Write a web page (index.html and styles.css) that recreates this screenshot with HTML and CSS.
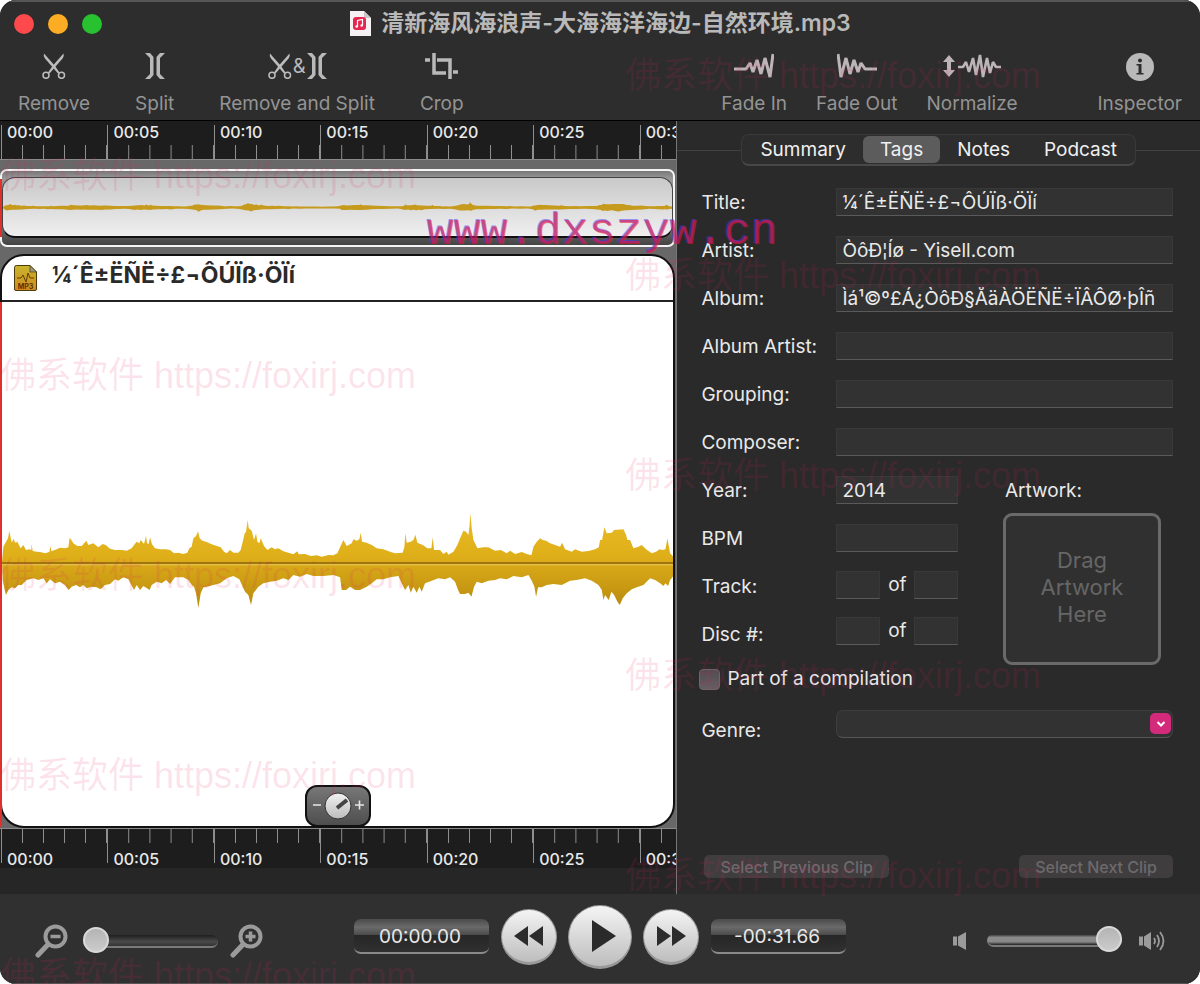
FILE: index.html
```html
<!DOCTYPE html>
<html lang="en">
<head>
<meta charset="utf-8">
<title>Audio Editor</title>
<link rel="stylesheet" href="styles.css">
</head>
<body>
<svg class="defs" aria-hidden="true">
  <defs>
    <linearGradient id="gold" x1="0" y1="0" x2="0" y2="1">
      <stop offset="0" stop-color="#e8bb22"/><stop offset=".45" stop-color="#dfaf1a"/><stop offset="1" stop-color="#b98a0e"/>
    </linearGradient>
    <linearGradient id="mp3" x1="0" y1="0" x2="0" y2="1">
      <stop offset="0" stop-color="#c9b52e"/><stop offset="1" stop-color="#d08a1c"/>
    </linearGradient>
    <linearGradient id="knob" x1="0" y1="0" x2="0" y2="1">
      <stop offset="0" stop-color="#f2f2f2"/><stop offset="1" stop-color="#bcbcbc"/>
    </linearGradient>
    <path id="wave" d="M6 215L10 170L18 155L24 145L28 122L33 148L36 158L40 146L46 158L52 155L62 175L70 165L78 180L88 178L94 180L95 162L98 183L110 185L120 186L135 190L148 186L151 168L154 184L170 178L180 173L195 175L205 172L209 143L214 150L220 160L232 168L245 168L259 152L265 165L280 160L295 172L308 162L318 166L330 176L345 180L365 180L380 182L395 175L402 165L410 155L418 160L422 150L432 162L438 138L441 160L446 162L450 142L456 163L465 175L480 178L498 178L510 180L522 190L535 188L550 192L562 188L568 175L575 170L580 145L588 138L594 124L599 145L607 152L618 155L635 163L650 168L662 172L672 185L680 190L690 180L700 188L715 188L722 180L728 155L734 130L738 125L743 90L746 115L755 122L762 150L768 130L772 155L778 160L782 145L792 168L802 180L815 172L825 178L835 175L850 184L865 188L880 193L892 184L896 193L915 192L932 198L950 196L965 200L985 195L1000 196L1012 190L1020 172L1030 150L1040 168L1055 160L1060 148L1070 152L1078 148L1082 128L1086 155L1100 158L1115 165L1130 175L1150 178L1170 185L1185 190L1208 188L1213 170L1216 130L1220 158L1232 155L1240 150L1246 134L1252 158L1268 165L1282 175L1294 175L1298 142L1302 180L1320 180L1330 192L1340 185L1345 194L1360 185L1372 165L1380 145L1390 122L1398 125L1405 135L1408 110L1411 70L1415 115L1420 150L1432 175L1450 172L1465 172L1485 182L1502 180L1520 190L1530 182L1545 192L1565 186L1580 192L1594 196L1600 170L1610 155L1620 145L1628 150L1638 152L1650 160L1665 165L1680 170L1686 158L1695 178L1715 185L1725 178L1745 185L1765 183L1785 178L1796 172L1800 150L1806 150L1813 112L1820 130L1835 128L1842 120L1870 118L1878 135L1882 150L1890 150L1900 175L1915 170L1925 165L1938 178L1955 190L1968 185L1978 178L1988 180L1996 178L2002 145L2010 190L2020 200L2020 258L2010 270L2004 288L1996 280L1990 288L1980 280L1965 270L1950 265L1930 285L1910 292L1895 298L1880 310L1868 325L1859 345L1852 335L1842 315L1834 305L1826 330L1815 315L1810 330L1805 300L1795 285L1775 272L1755 265L1730 270L1710 272L1685 285L1660 282L1640 285L1625 292L1614 292L1608 320L1603 290L1595 272L1585 255L1565 262L1540 258L1520 268L1500 265L1485 270L1465 272L1445 280L1430 275L1422 290L1414 320L1405 308L1395 312L1380 312L1374 300L1365 275L1350 262L1335 268L1315 265L1295 272L1275 280L1265 305L1258 290L1250 308L1240 290L1232 308L1225 285L1215 300L1205 280L1195 258L1170 262L1150 268L1130 268L1115 280L1100 290L1080 300L1065 300L1050 290L1038 300L1025 300L1020 262L1000 255L970 258L940 258L920 252L900 260L880 255L865 270L850 265L830 272L810 275L790 280L775 290L760 310L753 345L745 315L735 305L728 290L718 268L700 258L680 265L660 280L640 285L620 290L610 292L602 310L595 354L588 310L582 290L575 285L565 270L550 262L525 262L510 282L498 270L485 280L470 275L455 285L449 300L430 288L420 300L410 285L402 300L385 268L370 262L355 272L345 268L330 282L315 285L302 298L290 292L275 290L260 295L250 285L240 292L228 285L215 290L206 300L195 285L180 275L165 280L150 268L140 280L130 265L115 270L100 265L80 270L65 285L55 285L45 295L35 292L25 300L18 315L14 300L8 270Z"/>
    <g id="scissors">
      <path d="M2 0.500Q1 3 3 5.500L16 20.500L17.500 19.500L13 13Z" fill="#bdbdbd"/>
      <path d="M21.500 .5Q22.500 3 20.500 5.500L7.500 20.500L6 19.500L10.500 13Z" fill="#bdbdbd"/>
      <g fill="none" stroke="#bdbdbd" stroke-width="1.500"><circle cx="4" cy="22.300" r="3"/><circle cx="19.500" cy="22.300" r="3"/></g>
    </g>
    <g id="split" fill="#b9b9b9">
      <path d="M0 0H5L8.500 4V22L5 26H0L5 21V5Z"/><path d="M20 0H15L11.500 4V22L15 26H20L15 21V5Z"/>
    </g>
  </defs>
</svg>

<div class="window">
  <header class="top">
    <div class="titlebar">
      <div class="lights">
        <button class="light red" aria-label="Close"></button>
        <button class="light amber" aria-label="Minimize"></button>
        <button class="light green" aria-label="Zoom"></button>
      </div>
      <h1 class="doc">
        <svg width="22" height="25" viewBox="0 0 22 25" aria-hidden="true"><path d="M1 0H15L22 7V25H1Z" fill="#f6f2f4"/><path d="M15 0V7H22Z" fill="#c9c5c8"/><rect x="4" y="6" width="13" height="13" rx="3" fill="#e5264f"/><path d="M8.500 15.500V9.500L13.500 8.500V14.500" fill="none" stroke="#fff" stroke-width="1.200"/><circle cx="7.700" cy="15.500" r="1.300" fill="#fff"/><circle cx="12.700" cy="14.500" r="1.300" fill="#fff"/></svg>
        清新海风海浪声-大海海洋海边-自然环境.mp3
      </h1>
    </div>
    <nav class="toolbar">
      <button class="tool"><svg width="24" height="26" viewBox="0 0 24 26"><use href="#scissors"/></svg>Remove</button>
      <button class="tool"><svg width="20" height="26" viewBox="0 0 20 26"><use href="#split"/></svg>Split</button>
      <button class="tool"><span class="combo"><svg width="24" height="26" viewBox="0 0 24 26"><use href="#scissors"/></svg><span class="amp">&amp;</span><svg width="20" height="26" viewBox="0 0 20 26"><use href="#split"/></svg></span>Remove and Split</button>
      <button class="tool"><svg width="33" height="26" viewBox="0 0 33 26"><path d="M0 7H5M9 0V20H21M12 7H25V26M28 19H33" fill="none" stroke="#b9b9b9" stroke-width="3.500"/></svg>Crop</button>
      <span class="spring"></span>
      <button class="tool near"><svg width="40" height="26" viewBox="0 0 40 26"><path d="M0 16H12L16 10L19 19L23 7L27 21L31 5L36 24L39 1" fill="none" stroke="#bdb4b7" stroke-width="3" stroke-linejoin="bevel"/></svg>Fade In</button>
      <button class="tool near"><svg width="40" height="26" viewBox="0 0 40 26"><path d="M40 16H28L24 10L21 19L17 7L13 21L9 5L4 24L1 1" fill="none" stroke="#bdb4b7" stroke-width="3" stroke-linejoin="bevel"/></svg>Fade Out</button>
      <button class="tool"><svg width="58" height="26" viewBox="0 0 58 26"><path d="M6 2L12 9H8V17H12L6 24L0 17H4V9H0Z" fill="#bdb4b7"/><path d="M15 14H20L23 9L26 19L30 5L33 22L37 2L40 24L44 5L47 20L50 9L53 14H58" fill="none" stroke="#bdb4b7" stroke-width="2.600" stroke-linejoin="bevel"/></svg>Normalize</button>
      <button class="tool last"><svg width="28" height="28" viewBox="0 0 28 28"><circle cx="14" cy="14" r="14" fill="#b9b9b9"/><circle cx="14" cy="7.500" r="2" fill="#2d2d2d"/><path d="M10.500 11H15.500V20H17.500V21.500H10.500V20H12.500V12.500H10.500Z" fill="#2d2d2d"/></svg>Inspector</button>
    </nav>
  </header>

  <main class="main">
    <section class="editor">
      <div class="ruler">
        <div class="seg">00:00</div><div class="seg">00:05</div><div class="seg">00:10</div><div class="seg">00:15</div><div class="seg">00:20</div><div class="seg">00:25</div><div class="seg end">00:30</div>
      </div>
      <div class="stage">
        <div class="overview">
          <div class="mini"><svg class="miniwave" viewBox="6 0 2014 420" preserveAspectRatio="none"><use href="#wave" fill="#c69a1c"/></svg></div>
        </div>
        <article class="clip">
          <h2 class="cliphead">
            <svg width="23" height="26" viewBox="0 0 23 26" aria-hidden="true"><path d="M2.500 .5H16L22.500 7V24Q22.500 25.500 21 25.500H2Q.5 25.500 .5 24V2.500Q.5 .5 2.500 .5Z" fill="url(#mp3)" stroke="#4b3a0c"/><path d="M16 .5V7H22.500Z" fill="#999a7a" stroke="#4b3a0c" stroke-width=".7"/><path d="M3 13H7L9 10L12 17L14 8L16 13H20" fill="none" stroke="#5e3f06"/><text x="11.500" y="23.500" text-anchor="middle" class="mp3">MP3</text></svg>
            <span class="clipname">¼´Ê±ËÑË÷£¬ÔÚÏß·ÖÏí</span>
          </h2>
          <div class="canvas">
            <svg class="wave" viewBox="6 0 2014 420" preserveAspectRatio="none"><use href="#wave" fill="url(#gold)"/><path d="M6 219H2020" stroke="#8a640a" stroke-width="4"/><path d="M6 224H2020" stroke="#e9c65c" stroke-width="3"/></svg>
          </div>
          <button class="gain" aria-label="Clip gain"><svg width="56" height="30" viewBox="0 0 56 30"><circle cx="28" cy="15" r="13" fill="url(#knob)" stroke="#333"/><path d="M27 17L37 9" stroke="#444" stroke-width="4"/><path d="M3 14H11M45 14H54M49.500 9.500V18.500" stroke="#e6e6e6" stroke-width="1.600"/></svg></button>
        </article>
      </div>
      <div class="ruler low">
        <div class="seg">00:00</div><div class="seg">00:05</div><div class="seg">00:10</div><div class="seg">00:15</div><div class="seg">00:20</div><div class="seg">00:25</div><div class="seg end">00:30</div>
      </div>
      <div class="gutter"></div>
    </section>

    <aside class="inspector">
      <div class="tabrow">
        <div class="tabs" role="tablist">
          <button class="tab" role="tab">Summary</button><button class="tab on" role="tab" aria-selected="true">Tags</button><button class="tab" role="tab">Notes</button><button class="tab" role="tab">Podcast</button>
        </div>
      </div>
      <form class="form">
        <div class="row"><label for="title">Title:</label><input class="field" id="title" value="¼´Ê±ËÑË÷£¬ÔÚÏß·ÖÏí"></div>
        <div class="row"><label for="artist">Artist:</label><input class="field" id="artist" value="ÒôÐ¦Íø - Yisell.com"></div>
        <div class="row"><label for="album">Album:</label><input class="field" id="album" value="Ìá¹©º£Á¿ÒôÐ§ÅäÀÖËÑË÷ÏÂÔØ·þÎñ"></div>
        <div class="row"><label for="aartist">Album Artist:</label><input class="field" id="aartist"></div>
        <div class="row"><label for="grouping">Grouping:</label><input class="field" id="grouping"></div>
        <div class="row"><label for="composer">Composer:</label><input class="field" id="composer"></div>
        <div class="split">
          <div class="numbers">
            <div class="row"><label for="year">Year:</label><input class="field" id="year" value="2014"></div>
            <div class="row"><label for="bpm">BPM</label><input class="field" id="bpm"></div>
            <div class="row"><label for="track">Track:</label><span class="pair"><input class="field" id="track"><label for="tracks">of</label><input class="field" id="tracks"></span></div>
            <div class="row"><label for="disc">Disc #:</label><span class="pair raised"><input class="field" id="disc"><label for="discs">of</label><input class="field" id="discs"></span></div>
          </div>
          <div class="art">
            <span class="artlabel">Artwork:</span>
            <div class="drop">Drag<br>Artwork<br>Here</div>
          </div>
        </div>
        <label class="check"><input type="checkbox" class="box">Part of a compilation</label>
        <div class="row genre"><label for="genre">Genre:</label>
          <span class="combobox"><input id="genre" class="combofield"><button type="button" class="arrow" aria-label="Show genres"><svg width="10" height="8" viewBox="0 0 10 8"><path d="M1.500 2L5 5.500L8.500 2" fill="none" stroke="#fff" stroke-width="2"/></svg></button></span>
        </div>
        <div class="steps"><button type="button" class="step" disabled>Select Previous Clip</button><button type="button" class="step" disabled>Select Next Clip</button></div>
      </form>
    </aside>
  </main>

  <footer class="foot">
    <div class="zoom">
      <svg width="33" height="34" viewBox="0 0 33 34" aria-hidden="true"><circle cx="20.500" cy="12.500" r="10" fill="none" stroke="#9b9b9b" stroke-width="4"/><path d="M12.500 21L3 31" stroke="#9b9b9b" stroke-width="5" stroke-linecap="round"/><path d="M15.500 12.500H25.500" stroke="#9b9b9b" stroke-width="3.500"/></svg>
      <input class="range" type="range" min="0" max="100" value="0" aria-label="Zoom">
      <svg width="33" height="34" viewBox="0 0 33 34" aria-hidden="true"><circle cx="20.500" cy="12.500" r="10" fill="none" stroke="#9b9b9b" stroke-width="4"/><path d="M12.500 21L3 31" stroke="#9b9b9b" stroke-width="5" stroke-linecap="round"/><path d="M15.500 12.500H25.500M20.500 7.500V17.500" stroke="#9b9b9b" stroke-width="3.500"/></svg>
    </div>
    <div class="transport">
      <output class="time">00:00.00</output>
      <button class="round" aria-label="Rewind"><svg width="30" height="20" viewBox="0 0 30 20"><path d="M0 10L14 0V20ZM15 10L29 0V20Z" fill="#2c2c2c"/></svg></button>
      <button class="round big" aria-label="Play"><svg width="26" height="32" viewBox="0 0 26 32"><path d="M1 0L25 16L1 32Z" fill="#2a2a2a"/></svg></button>
      <button class="round" aria-label="Fast forward"><svg width="30" height="20" viewBox="0 0 30 20"><path d="M30 10L16 0V20ZM15 10L1 0V20Z" fill="#2c2c2c"/></svg></button>
      <output class="time">-00:31.66</output>
    </div>
    <div class="volume">
      <svg width="14" height="18" viewBox="0 0 14 18" aria-hidden="true"><path d="M0 4.500H4V13.500H0ZM5 4.500L13 0V18L5 13.500Z" fill="#9b9b9b"/></svg>
      <input class="range loud" type="range" min="0" max="100" value="100" aria-label="Volume">
      <svg width="26" height="20" viewBox="0 0 26 20" aria-hidden="true"><path d="M0 5.500H4V14.500H0ZM5 5.500L12 1V19L5 14.500Z" fill="#9b9b9b"/><path d="M15 7Q17 10 15 13M18 4Q22 10 18 16M21 1Q28 10 21 19" fill="none" stroke="#9b9b9b" stroke-width="1.800"/></svg>
    </div>
  </footer>

  <div class="marks" aria-hidden="true">
    <span class="mark l m1">佛系软件 https://foxirj.com</span>
    <span class="mark l m3">佛系软件 https://foxirj.com</span>
    <span class="mark l m5">佛系软件 https://foxirj.com</span>
    <span class="mark l m7">佛系软件 https://foxirj.com</span>
    <span class="mark l m9">佛系软件 https://foxirj.com</span>
    <span class="mark r m0">佛系软件 https://foxirj.com</span>
    <span class="mark r m2">佛系软件 https://foxirj.com</span>
    <span class="mark r m4">佛系软件 https://foxirj.com</span>
    <span class="mark r m6">佛系软件 https://foxirj.com</span>
    <span class="mark r m8">佛系软件 https://foxirj.com</span>
    <span class="site">www.dxszyw.cn</span>
  </div>
</div>
</body>
</html>
```

FILE: styles.css
```css
* { box-sizing: border-box; }
body { margin: 0; background: #fff; color: #e9e9e9; font: 400 19px/24px Inter, "Noto Sans CJK SC", sans-serif; }
button, input { font: inherit; color: inherit; }
button { border: 0; padding: 0; background: none; }
svg { display: block; flex: none; }
.defs { position: absolute; width: 0; height: 0; }

.window { position: relative; display: flex; flex-direction: column; min-height: 100vh; overflow: hidden; background: #2a2a2a; border-radius: 16px; }

/* title and toolbar */
.top { background: #2d2d2d; border-top: 2px solid #555; border-bottom: 1px solid #000; }
.titlebar { display: flex; align-items: center; justify-content: center; position: relative; height: 44px; padding-bottom: 2px; }
.lights { position: absolute; left: 14px; top: 12px; display: flex; gap: 14px; }
.light { width: 20px; height: 20px; border-radius: 50%; }
.red { background: #fc4a4c; }
.amber { background: #fdad24; }
.green { background: #28c130; }
.doc { display: flex; align-items: center; gap: 10px; margin: 0; color: #b9b9b9; font-size: 23px; font-weight: 600; line-height: 30px; }
.toolbar { display: flex; align-items: flex-start; gap: 45px; height: 74px; padding: 7px 18px 0; color: #949494; }
.tool { display: flex; flex-direction: column; align-items: center; justify-content: space-between; height: 63px; white-space: nowrap; }
.tool.near { margin-right: -16px; }
.tool.last { margin-left: 35px; }
.combo { display: flex; align-items: center; gap: 1px; }
.amp { color: #b9b9b9; font-size: 20px; }
.spring { flex: 1; }

/* body */
.main { display: flex; flex: 1; }
.editor { display: flex; flex-direction: column; flex: 677 1 0; min-width: 0; background: #262626; border-right: 1px solid #777; }
.ruler { display: flex; height: 39px; padding: 4px 0 0 1px; overflow: hidden; background: #1d1d1d; border-bottom: 1px solid #8a8a8a; font-size: 16px; font-weight: 500; line-height: 14px; }
.seg { flex: 5 0 0; min-width: 0; border-left: 1px solid #8f8f8f; background: linear-gradient(90deg, transparent calc(100% - 1px), #8f8f8f 0) 0 100% / 20% 14px repeat-x; text-indent: 5px; white-space: nowrap; }
.seg.end { flex-grow: 1.700; background-size: 60% 14px; }
.low { padding: 0 0 5px 1px; border: 0; border-top: 1px solid #8a8a8a; height: 40px; }
.low .seg { padding-top: 23px; background-position: 0 0; }
.gutter { height: 26px; }
.stage { display: flex; flex-direction: column; flex: 1; gap: 7px; padding: 9px 1px 0 0; background: #686868; }
.overview { position: relative; height: 78px; padding: 6px 0 7px; border: 2px solid #f4f4f4; border-radius: 7px; background: linear-gradient(#777, #999 10%, #666 80%, #444); }
.overview::before { content: ""; position: absolute; left: -2px; top: 8px; bottom: 8px; width: 2px; background: #e0302c; }
.mini { display: flex; align-items: center; height: 100%; overflow: hidden; border: 1px solid #444; border-bottom: 2px solid #111; border-radius: 13px; background: linear-gradient(#c9c9c9, #efefef); }
.miniwave { width: 100%; height: 14px; }
.clip { position: relative; display: flex; flex-direction: column; flex: 1; border: 2px solid #111; border-radius: 24px; background: #fff; }
.clip::before { content: ""; position: absolute; left: -2px; top: 46px; bottom: -1px; width: 2px; background: #e0302c; }
.cliphead { display: flex; align-items: center; gap: 15px; height: 46px; margin: 0; padding-left: 12px; border-bottom: 2px solid #222; color: #2a2a2a; font-size: 23px; font-weight: 700; }
.clipname { padding-bottom: 7px; }
.mp3 { font: 700 7px Inter, sans-serif; fill: #5e2f06; }
.canvas { display: flex; flex: 1; align-items: center; padding-bottom: 9px; }
.wave { width: 100%; height: 140px; }
.gain { position: absolute; left: 50%; bottom: -1px; display: grid; place-items: center; width: 66px; height: 42px; margin-left: -33px; border: 2px solid #111; border-radius: 12px; background: linear-gradient(#777, #4e4e4e); }

/* inspector */
.inspector { display: flex; flex-direction: column; flex: 523 1 0; min-width: 0; background: #2a2a2a; }
.tabrow { display: flex; align-items: center; margin-top: 13px; }
.tabrow::before, .tabrow::after { content: ""; flex: 1; height: 1px; background: #414141; }
.tabs { display: flex; height: 32px; padding: 1px; border: 1px solid #3a3a3a; border-bottom: 2px solid #484848; border-radius: 8px; background: #2d2d2d; }
.tab { padding: 0 17px; border-radius: 6px; color: #f0f0f0; }
.tab.on { background: #5c5c5c; }
.form { display: flex; flex-direction: column; flex: 1; padding: 12px 27px 16px 24px; }
.row { display: grid; grid-template-columns: 135px 1fr; align-items: center; height: 48px; }
.row > label { padding-top: 2px; }
.field { width: 100%; height: 28px; padding: 0 5px; border: 1px solid #383838; border-bottom-color: #5a5a5a; background: #323232; }
.split { display: flex; justify-content: space-between; }
.numbers { width: 257px; }
.pair { display: grid; grid-template-columns: 44px 1fr 44px; margin-bottom: 2px; text-align: center; }
.pair.raised { margin-bottom: 6px; }
.pair label { line-height: 28px; }
.art { width: 170px; padding-top: 13px; }
.artlabel { display: block; margin-left: 2px; }
.drop { display: grid; place-items: center; align-content: center; width: 158px; height: 152px; margin-top: 10px; padding-bottom: 4px; border: 3px solid #6a6a6a; border-radius: 9px; color: #666; font-size: 22px; line-height: 27px; text-align: center; background: #303030; }
.check { display: flex; align-items: center; gap: 7px; height: 24px; margin: 2px 0 0 -2px; }
.box { appearance: none; width: 21px; height: 21px; margin: 0; border: 1px solid #6d656a; border-radius: 4px; background: linear-gradient(#524c50, #655e62); }
.genre { margin-top: 15px; }
.combobox { position: relative; display: flex; margin-top: -12px; }
.combofield { width: 100%; height: 28px; padding: 0 30px 0 6px; border: 1px solid #3e3e3e; border-bottom-color: #565656; border-radius: 7px; background: #323232; }
.arrow { position: absolute; right: 2px; top: 3px; display: grid; place-items: center; width: 21px; height: 21px; border-radius: 5px; background: #d42a7c; }
.steps { display: flex; justify-content: space-between; margin: auto 0 0 3px; }
.step { height: 23px; padding: 0 16px; border-radius: 5px; background: #3f3d3e; color: #6d6a6c; font-size: 16px; font-weight: 500; line-height: 20px; }

/* footer */
.foot { display: grid; grid-template-columns: 1fr auto 1fr; align-items: center; height: 90px; padding: 0 35px 4px; background: #303030; border-bottom: 1px solid #555; }
.zoom, .volume, .transport { display: flex; align-items: center; }
.zoom { gap: 12px; padding-top: 9px; }
.volume { justify-content: flex-end; gap: 17px; padding-top: 8px; }
.transport { gap: 12px; }
.time { width: 135px; height: 35px; padding-right: 3px; border-radius: 7px; border-bottom: 2px solid #8a8a8a; background: linear-gradient(#4b4b4b, #6a6a6a 25%, #4b4b4b 48%, #272727 50%, #303030); text-align: center; line-height: 35px; }
.round { display: grid; place-items: center; width: 56px; height: 56px; border: 1px solid #999; border-bottom: 3px solid #999; border-radius: 50%; background: linear-gradient(#f4f4f4, #bdbdbd); }
.big { width: 64px; height: 64px; margin: 0 -1px; }
.big svg { margin-left: 8px; }
.range { appearance: none; width: 135px; height: 28px; margin: 0 0 0 3px; background: none; }
.range::-webkit-slider-runnable-track { height: 13px; border-radius: 7px; border-bottom: 2px solid #7a7a7a; background: linear-gradient(#1f1f1f, #4a4a4a 60%, #333); }
.loud::-webkit-slider-runnable-track { background: linear-gradient(#222, #8a8a8a 30%, #8a8a8a 70%, #222); }
.range::-webkit-slider-thumb { appearance: none; width: 26px; height: 26px; margin-top: -8px; border: 2px solid #d9d9d9; border-radius: 50%; background: linear-gradient(#b4b4b4, #cbcbcb); }

/* overlaid marks */
.marks { position: absolute; inset: 0; overflow: hidden; pointer-events: none; }
.mark { position: absolute; color: rgba(225, 30, 100, .13); font: 400 36px/40px "Liberation Sans", "Noto Sans CJK SC", sans-serif; white-space: nowrap; }
.l { left: 0; }
.r { left: 625px; }
.m0 { top: 56px; }
.m1 { top: 156px; }
.m2 { top: 256px; }
.m3 { top: 356px; }
.m4 { top: 456px; }
.m5 { top: 556px; }
.m6 { top: 656px; }
.m7 { top: 756px; }
.m8 { top: 856px; }
.m9 { top: 956px; }
.site { position: absolute; left: 427px; top: 208px; color: rgba(235, 20, 60, .6); font: 400 45px/50px "Liberation Mono", monospace; text-shadow: -1px -1px 0 rgba(70, 60, 255, .5); }
```
